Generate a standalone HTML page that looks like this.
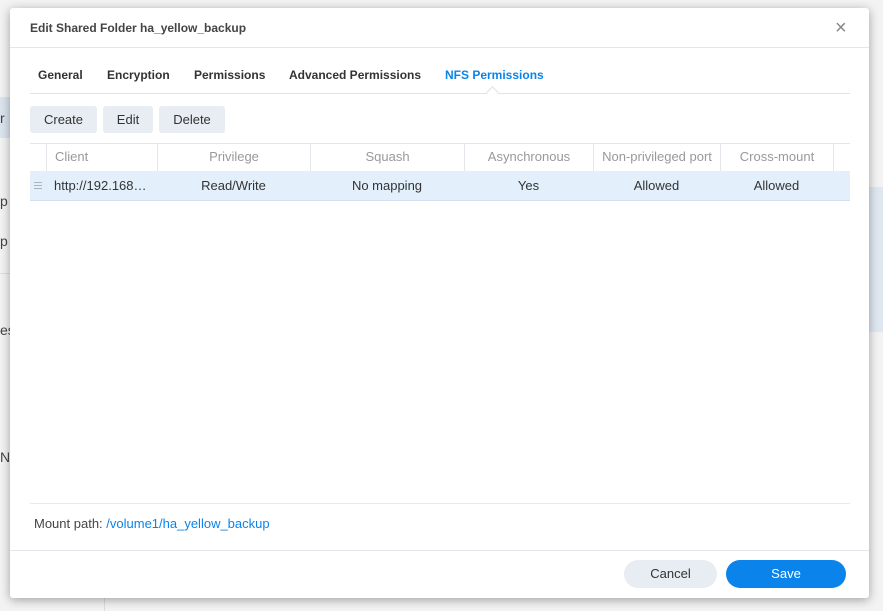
<!DOCTYPE html>
<html><head><style>
*{margin:0;padding:0;box-sizing:border-box}
body{width:883px;height:611px;overflow:hidden;background:#f3f3f3;font-family:"Liberation Sans",sans-serif;position:relative;color:#333}
.a{position:absolute}
.dlg{position:absolute;left:10px;top:8px;width:859px;height:590px;background:#fff;border-radius:3px;box-shadow:0 2px 10px rgba(0,0,0,.35)}
.tab{position:absolute;top:60px;font-size:12px;font-weight:bold;color:#333}
.btn{position:absolute;top:98px;height:27px;background:#e8edf3;border-radius:3px;font-size:13px;line-height:27px;text-align:center;color:#333}
.th{position:absolute;top:135px;height:28px;line-height:28px;font-size:13px;color:#999;text-align:center;border-left:1px solid #e3e7ec}
.td{position:absolute;top:163px;height:29px;line-height:29px;font-size:13px;color:#333;text-align:center}
.hl{position:absolute;left:4px;width:8px;height:1px;background:#a9b4c0}
</style></head><body>
<div class="a" style="left:0;top:97px;width:10px;height:41px;background:#dbe3ee"></div>
<div class="a" style="left:0;top:110px;font-size:14px;color:#444">r</div>
<div class="a" style="left:0;top:193px;font-size:14px;color:#444">p</div>
<div class="a" style="left:0;top:233px;font-size:14px;color:#444">p</div>
<div class="a" style="left:0;top:273px;width:10px;height:1px;background:#ddd"></div>
<div class="a" style="left:0;top:322px;font-size:14px;color:#444">es</div>
<div class="a" style="left:0;top:449px;font-size:14px;color:#444">NN</div>
<div class="a" style="left:869px;top:187px;width:14px;height:145px;background:#dfe7f1"></div>
<div class="a" style="left:104px;top:598px;width:1px;height:13px;background:#ddd"></div>
<div class="dlg">
 <div class="a" style="left:20px;top:13px;font-size:12px;font-weight:bold;color:#444">Edit Shared Folder ha_yellow_backup</div>
 <div class="a" style="left:825px;top:9px;font-size:20px;color:#888">×</div>
 <div class="a" style="left:0;top:39px;width:859px;height:1px;background:#e3e7ec"></div>
 <div class="tab" style="left:28px">General</div>
 <div class="tab" style="left:97px">Encryption</div>
 <div class="tab" style="left:184px">Permissions</div>
 <div class="tab" style="left:279px">Advanced Permissions</div>
 <div class="tab" style="left:435px;color:#0a84ea">NFS Permissions</div>
 <div class="a" style="left:20px;top:85px;width:820px;height:1px;background:#dde3ea"></div>
 <div class="a" style="left:478px;top:80px;width:9px;height:9px;background:#fff;border-left:1px solid #dde3ea;border-top:1px solid #dde3ea;transform:rotate(45deg)"></div>
 <div class="btn" style="left:20px;width:67px">Create</div>
 <div class="btn" style="left:93px;width:50px">Edit</div>
 <div class="btn" style="left:149px;width:66px">Delete</div>
 <div class="a" style="left:20px;top:135px;width:820px;height:1px;background:#e3e7ec"></div>
 <div class="th" style="left:36px;width:111px;text-align:left;padding-left:8px">Client</div>
 <div class="th" style="left:147px;width:153px">Privilege</div>
 <div class="th" style="left:300px;width:154px">Squash</div>
 <div class="th" style="left:454px;width:129px">Asynchronous</div>
 <div class="th" style="left:583px;width:127px">Non-privileged port</div>
 <div class="th" style="left:710px;width:113px">Cross-mount</div>
 <div class="th" style="left:823px;width:17px"></div>
 <div class="a" style="left:20px;top:163px;width:820px;height:30px;background:#e3f0fc;border-bottom:1px solid #d3e2f0">
  <div class="hl" style="top:11px"></div><div class="hl" style="top:14px"></div><div class="hl" style="top:17px"></div>
 </div>
 <div class="td" style="left:44px;text-align:left">http://192.168…</div>
 <div class="td" style="left:147px;width:153px">Read/Write</div>
 <div class="td" style="left:300px;width:154px">No mapping</div>
 <div class="td" style="left:454px;width:129px">Yes</div>
 <div class="td" style="left:583px;width:127px">Allowed</div>
 <div class="td" style="left:710px;width:113px">Allowed</div>
 <div class="a" style="left:20px;top:495px;width:820px;height:1px;background:#e6e9ed"></div>
 <div class="a" style="left:24px;top:508px;font-size:13px;color:#444">Mount path: <span style="color:#0a84ea">/volume1/ha_yellow_backup</span></div>
 <div class="a" style="left:0;top:542px;width:859px;height:1px;background:#e3e7ec"></div>
 <div class="a" style="left:614px;top:552px;width:93px;height:28px;border-radius:14px;background:#e8edf3;font-size:13px;line-height:28px;text-align:center">Cancel</div>
 <div class="a" style="left:716px;top:552px;width:120px;height:28px;border-radius:14px;background:#0a84ea;color:#fff;font-size:13px;line-height:28px;text-align:center">Save</div>
</div>
</body></html>
